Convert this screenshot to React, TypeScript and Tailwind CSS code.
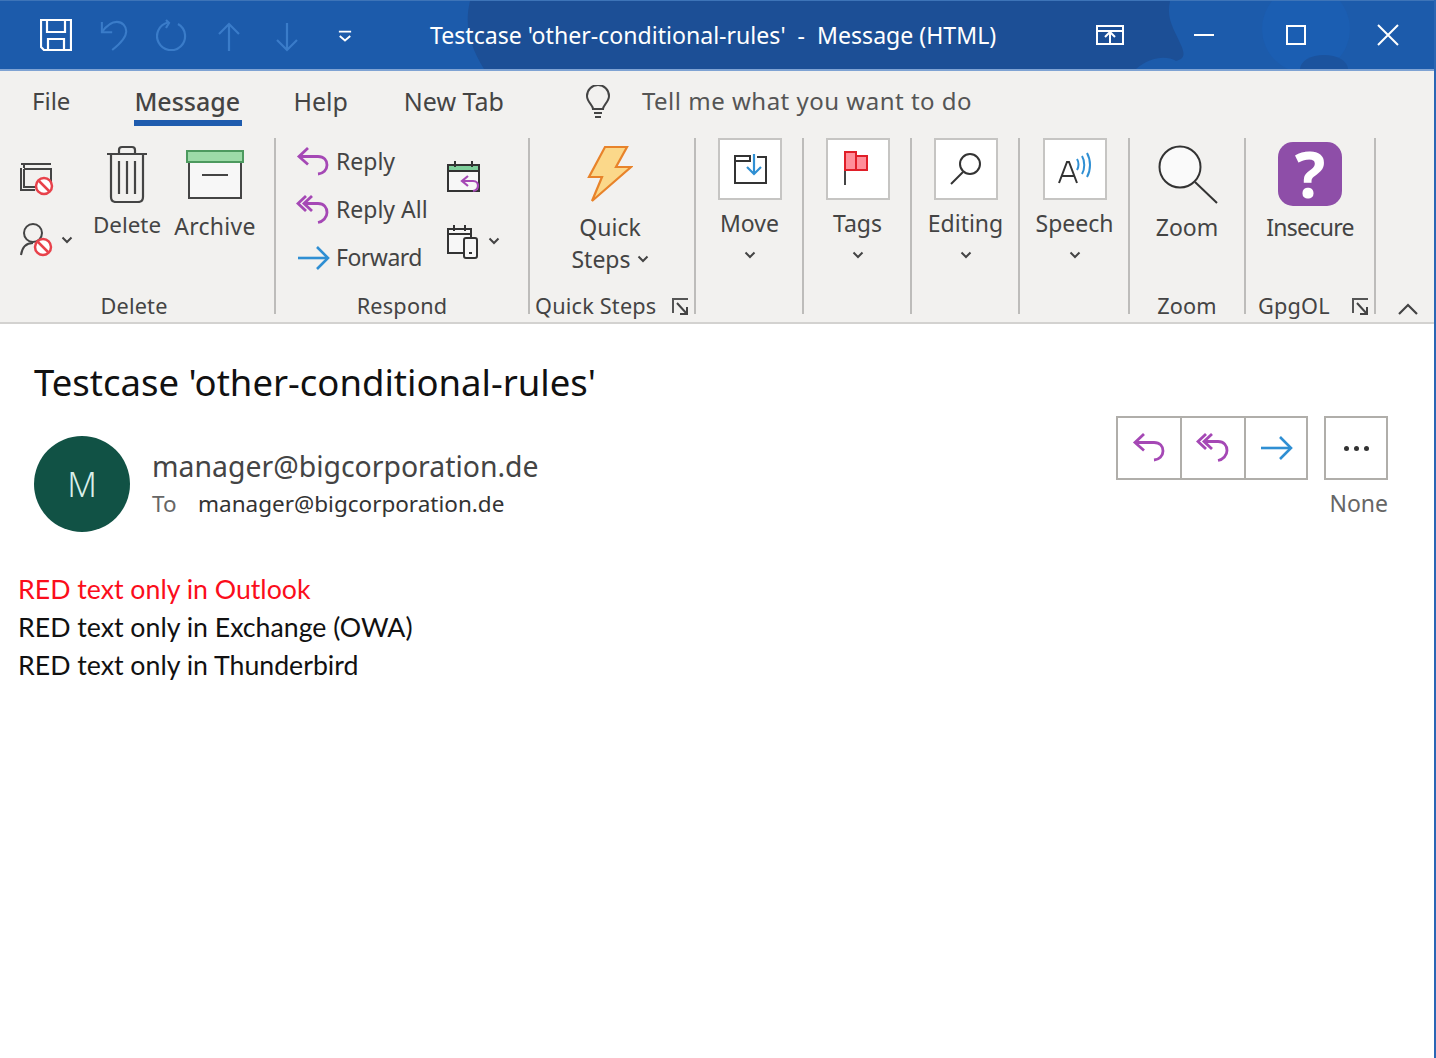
import type { ReactNode } from "react";

const sans = "font-['Noto_Sans','Open_Sans',sans-serif]";

function Chevron({ className = "" }: { className?: string }) {
  return (
    <svg width="12" height="8" viewBox="0 0 12 8" className={className} fill="none" stroke="#444" strokeWidth="2">
      <path d="M1.5 1.5 6 6l4.5-4.5" />
    </svg>
  );
}

function Launcher() {
  return (
    <svg width="18" height="18" viewBox="0 0 18 18" fill="none" stroke="#555" strokeWidth="2">
      <path d="M16 1H1v14" />
      <path d="M5 5l10 11M15 9v7H8" stroke="#444" />
    </svg>
  );
}

function ReplyIcon({ size = 34 }: { size?: number }) {
  return (
    <svg width={size} height={size} viewBox="0 0 34 34" fill="none" stroke="#a548b5" strokeWidth="2.8">
      <path d="M12 3 3 11.5l9 8" />
      <path d="M3 11.5h19c6 0 9 4 9 8.500 0 5-4 8.500-9 9" />
    </svg>
  );
}

function ReplyAllIcon({ size = 34 }: { size?: number }) {
  return (
    <svg width={size} height={size} viewBox="0 0 34 34" fill="none" stroke="#a548b5" strokeWidth="2.8">
      <path d="M10 3 2 10.500l8 7.500" />
      <path d="M16 3 8 10.500l8 7.500" />
      <path d="M8 10.500h14c6 0 9 4 9 9 0 5-4 9-9 10" />
    </svg>
  );
}

function ForwardIcon({ size = 34 }: { size?: number }) {
  return (
    <svg width={size} height={size} viewBox="0 0 34 34" fill="none" stroke="#2f8fd3" strokeWidth="2.600">
      <path d="M2 17h29" />
      <path d="M21 6l11 11-11 11" />
    </svg>
  );
}

function NoEntry({ x, y }: { x: number; y: number }) {
  return (
    <g>
      <circle cx={x} cy={y} r="8" fill="#fff" stroke="#e8424b" strokeWidth="2.500" />
      <path d={`M${x - 5} ${y - 5}l10 10`} stroke="#e8424b" strokeWidth="2.500" />
    </g>
  );
}

function Group({
  width,
  label,
  launcher,
  children,
  labelClass = "",
}: {
  width: string;
  label?: string;
  launcher?: boolean;
  children: ReactNode;
  labelClass?: string;
}) {
  return (
    <div className={`flex h-[176px] shrink-0 flex-col border-r-2 border-[#bdbcba] ${width}`}>
      <div className="flex min-h-0 flex-1">{children}</div>
      <div className={`relative flex h-[28px] items-center justify-center pt-[12px] text-[21.7px] tracking-[0.2px] text-[#444] ${labelClass}`}>
        {label}
        {launcher && (
          <span className="absolute right-[4px] top-[12px]">
            <Launcher />
          </span>
        )}
      </div>
    </div>
  );
}

function BoxedButton({ icon, label }: { icon: ReactNode; label: string }) {
  return (
    <div className="ml-[1px] flex w-full flex-col items-center">
      <div className="flex h-[62px] w-[64px] items-center justify-center border-2 border-[#c6c5c3] bg-white">{icon}</div>
      <div className="mt-[7px] h-[32px] text-[23px] leading-[32px] text-[#444]">{label}</div>
      <Chevron className="mt-[12px]" />
    </div>
  );
}

function RespondRow({ icon, label, labelClass = "" }: { icon: ReactNode; label: string; labelClass?: string }) {
  return (
    <div className="flex h-[48px] items-center">
      <span className="flex w-[40px] shrink-0 items-center">{icon}</span>
      <span className={`-mt-[1px] text-[23px] text-[#444] ${labelClass}`}>{label}</span>
    </div>
  );
}

function CalendarReply() {
  return (
    <svg width="36" height="36" viewBox="0 0 36 36" fill="none">
      <path d="M2 6h31v26H2z" stroke="#333" strokeWidth="2" fill="#f7f7f7" />
      <path d="M2 6h31v6H2z" fill="#7fcf9b" stroke="#333" strokeWidth="2" />
      <path d="M9 2v6M26 2v6" stroke="#333" strokeWidth="2" />
      <path d="M22 17l-6 5 6 5M16 22h11c4 0 5 3 5 4.500 0 3-2 5-5 5.500" stroke="#a548b5" strokeWidth="2.200" />
    </svg>
  );
}

function CalendarPhone() {
  return (
    <svg width="34" height="36" viewBox="0 0 34 36" fill="none">
      <path d="M2 6h23v24H2z" stroke="#333" strokeWidth="2" fill="#f7f7f7" />
      <path d="M2 6h23v5H2z" stroke="#333" strokeWidth="2" />
      <path d="M8 2v6M19 2v6" stroke="#333" strokeWidth="2" />
      <rect x="18" y="15" width="13" height="20" rx="2" fill="#f7f7f7" stroke="#333" strokeWidth="2" />
      <path d="M23 30h3" stroke="#333" strokeWidth="2" />
    </svg>
  );
}

export default function App() {
  return (
    <div className={`flex h-[1058px] w-[1436px] flex-col overflow-hidden border-r-2 border-[#2a66b4] bg-white ${sans}`}>
      {/* Title bar */}
      <div className="relative flex h-[71px] shrink-0 items-center border-b-2 border-t border-[#7fa3d3] border-t-[#3d74b8] bg-[#1c5bab] text-white">
        <svg className="absolute inset-0" width="1436" height="68" viewBox="0 0 1436 68">
          <path d="M470 0c-6 25 0 45 14 68h652c14-12 30-14 40-8 8-2 10-6 4-18-6-14-14-24-10-42z" fill="#1c4f96" />
          <circle cx="1306" cy="28" r="44" fill="#1b5eb2" />
          <ellipse cx="1324" cy="68" rx="24" ry="14" fill="#1b539e" />
        </svg>
        <div className="relative flex w-full items-center">
          <div className="ml-[40px] flex w-[390px] items-center">
            <svg width="32" height="32" viewBox="0 0 32 32" fill="none" stroke="#fff" strokeWidth="2.200">
              <path d="M1 1h30v30H4l-3-3z" />
              <path d="M7 1v12h18V1" />
              <path d="M8 31V20h16v11" />
            </svg>
            <svg width="30" height="34" viewBox="0 0 32 34" fill="none" stroke="#3a7cc9" strokeWidth="2.200" className="ml-[28px]">
              <path d="M2 3v11h11" />
              <path d="M2 14C7 7 12 3 18 3c6 0 10 5 10 10 0 6-6 13-15 20" />
            </svg>
            <svg width="32" height="32" viewBox="0 0 32 32" fill="none" stroke="#3a7cc9" strokeWidth="2.200" className="ml-[26px]">
              <path d="M22 5a14 14 0 1 1-10-1.500" />
              <path d="M10 1l3 3-3 5" />
            </svg>
            <svg width="22" height="30" viewBox="0 0 22 30" fill="none" stroke="#3a7cc9" strokeWidth="2.200" className="ml-[30px] mt-[4px]">
              <path d="M11 29V2M1 12 11 2l10 10" />
            </svg>
            <svg width="22" height="30" viewBox="0 0 22 30" fill="none" stroke="#3a7cc9" strokeWidth="2.200" className="ml-[36px] mt-[4px]">
              <path d="M11 1v27M1 18l10 10 10-10" />
            </svg>
            <svg width="14" height="14" viewBox="0 0 16 14" fill="none" stroke="#fff" strokeWidth="2.200" className="ml-[40px] mt-[1px]">
              <path d="M1 2h14M2 7l6 5 6-5" />
            </svg>
          </div>
          <div className="whitespace-pre text-[23.1px] leading-[32px]">Testcase 'other-conditional-rules'  -  Message (HTML)</div>
          <div className="ml-auto mr-[35px] flex items-center">
            <svg width="28" height="20" viewBox="0 0 28 20" fill="none" stroke="#fff" strokeWidth="2">
              <path d="M1 1h26v18H1zM1 6h26M14 18V8M9 12l5-5 5 5" />
            </svg>
            <svg width="22" height="4" viewBox="0 0 22 4" fill="none" stroke="#fff" strokeWidth="2" className="ml-[69px]">
              <path d="M1 2h20" />
            </svg>
            <svg width="20" height="20" viewBox="0 0 20 20" fill="none" stroke="#fff" strokeWidth="2" className="ml-[71px]">
              <path d="M1 1h18v18H1z" />
            </svg>
            <svg width="22" height="22" viewBox="0 0 22 22" fill="none" stroke="#fff" strokeWidth="2" className="ml-[71px]">
              <path d="M1 1l20 20M21 1 1 21" />
            </svg>
          </div>
        </div>
      </div>

      {/* Ribbon */}
      <div className="flex h-[253px] shrink-0 flex-col border-b-2 border-[#d3d2d0] bg-[#f2f1ef]">
        <div className="flex h-[67px] shrink-0 items-start text-[24px] text-[#444]">
          <div className="ml-[32px] mt-[14px] leading-[32px]">File</div>
          <div className="ml-[64px] mt-[14px] flex flex-col text-[25px] font-medium">
            <span className="leading-[32px]">Message</span>
            <span className="mt-[3px] h-[6px] w-[108px] bg-[#1f5cae]" />
          </div>
          <div className="ml-[51px] mt-[14px] text-[25px] leading-[32px]">Help</div>
          <div className="ml-[56px] mt-[14px] text-[25px] leading-[32px]">New Tab</div>
          <svg width="26" height="34" viewBox="0 0 26 34" fill="none" stroke="#444" strokeWidth="2" className="ml-[81px] mt-[14px]">
            <path d="M8 24c0-4-6-7-6-13a11 11 0 0 1 22 0c0 6-6 9-6 13z" />
            <path d="M9 28h8M10 32h6" />
          </svg>
          <div className="ml-[31px] mt-[14px] leading-[32px] tracking-[0.5px] text-[#555]">Tell me what you want to do</div>
        </div>

        <div className="flex flex-1 items-start">
          <Group width="w-[276px]" label="Delete" labelClass="pr-[6px]">
            <div className="flex w-[92px] flex-col pl-[19px] pt-[24px]">
              <svg width="36" height="34" viewBox="0 0 36 34" fill="none">
                <path d="M2 2h30M5 2v4M2 6v22h14" stroke="#444" strokeWidth="2" />
                <path d="M5 7h27v14M5 7v18h12" stroke="#444" strokeWidth="2" />
                <NoEntry x={25} y={24} />
              </svg>
              <div className="mt-[26px] flex items-center">
                <svg width="36" height="36" viewBox="0 0 36 36" fill="none">
                  <circle cx="14" cy="11" r="9" stroke="#444" strokeWidth="2" />
                  <path d="M2 33c1-7 4-12 12-12" stroke="#444" strokeWidth="2" />
                  <NoEntry x={24} y={25} />
                </svg>
                <Chevron className="ml-[6px]" />
              </div>
            </div>
            <div className="flex w-[70px] flex-col items-center pt-[7px]">
              <svg width="42" height="58" viewBox="0 0 42 58" fill="none" stroke="#444" strokeWidth="2.200">
                <path d="M1 9h40M13 9V5c0-2 1-3 3-3h10c2 0 3 1 3 3v4" />
                <path d="M5 9v43c0 3 2 5 5 5h22c3 0 5-2 5-5V9" />
                <path d="M13 16v33M21 16v33M29 16v33" />
              </svg>
              <div className="mt-[6px] text-[22.4px] leading-[32px] text-[#444]">Delete</div>
            </div>
            <div className="ml-[9px] flex w-[88px] flex-col items-center pt-[12px]">
              <svg width="58" height="50" viewBox="0 0 58 50" fill="none" stroke="#444" strokeWidth="2">
                <path d="M3 11h52v37H3z" fill="#f7f7f7" />
                <path d="M1 1h56v11H1z" fill="#9ddba8" stroke="#4d9a5f" />
                <path d="M16 25h26" />
              </svg>
              <div className="mt-[10px] text-[23px] leading-[32px] tracking-[0.3px] text-[#444]">Archive</div>
            </div>
          </Group>

          <Group width="w-[254px]" label="Respond">
            <div className="flex flex-col pl-[20px] pt-[0px]">
              <RespondRow icon={<ReplyIcon />} label="Reply" />
              <RespondRow icon={<ReplyAllIcon />} label="Reply All" />
              <RespondRow icon={<ForwardIcon />} label="Forward" labelClass="tracking-[-0.5px]" />
            </div>
            <div className="ml-[18px] flex flex-col pt-[21px]">
              <CalendarReply />
              <div className="mt-[28px] flex items-center">
                <CalendarPhone />
                <Chevron className="ml-[8px]" />
              </div>
            </div>
          </Group>

          <Group width="w-[166px]" label="Quick Steps" launcher labelClass="justify-start pl-[5px]">
            <div className="-ml-[2px] flex w-full flex-col items-center pt-[7px] text-[23px] leading-[32px] text-[#444]">
              <svg width="46" height="58" viewBox="0 0 46 58" fill="#fbd88a" stroke="#e8832a" strokeWidth="2.200">
                <path d="M18 2h22L29 22h15L5 56l10-24H2z" />
              </svg>
              <div className="mt-[8px]">Quick</div>
              <div className="flex items-center">
                Steps
                <Chevron className="ml-[6px]" />
              </div>
            </div>
          </Group>

          <Group width="w-[108px]">
            <BoxedButton
              label="Move"
              icon={
                <svg width="34" height="32" viewBox="0 0 34 32" fill="none">
                  <path d="M2 3h15v5h-15zM2 3v27h31V4h-9" stroke="#333" strokeWidth="2" />
                  <path d="M21 1v19M14 14l7 7 7-7" stroke="#2f8fd3" strokeWidth="2.200" />
                </svg>
              }
            />
          </Group>
          <Group width="w-[108px]">
            <BoxedButton
              label="Tags"
              icon={
                <svg width="26" height="34" viewBox="0 0 26 34" fill="none" className="-ml-[4px] -mt-[2px]">
                  <path d="M2 1v33" stroke="#444" strokeWidth="2" />
                  <path d="M13 5h11v14H13z" fill="#ff8e99" stroke="#e01e28" strokeWidth="2" />
                  <path d="M2 1h11v18H2z" fill="#ff8e99" stroke="#e01e28" strokeWidth="2" />
                </svg>
              }
            />
          </Group>
          <Group width="w-[108px]">
            <BoxedButton
              label="Editing"
              icon={
                <svg width="34" height="34" viewBox="0 0 34 34" fill="none" stroke="#333" strokeWidth="2">
                  <circle cx="21" cy="12" r="10" fill="#fff" />
                  <path d="M14 20 2 32" />
                </svg>
              }
            />
          </Group>
          <Group width="w-[110px]">
            <BoxedButton
              label="Speech"
              icon={
                <svg width="34" height="34" viewBox="0 0 34 34" fill="none">
                  <path d="M1 31 9 10h2l8 21M4 24h12" stroke="#333" strokeWidth="2" />
                  <path d="M19 7c2 3 2 8 0 11M24 4c3 5 3 13 0 18M29 1c4 7 4 17 0 24" stroke="#2f8fd3" strokeWidth="2" />
                </svg>
              }
            />
          </Group>
          <Group width="w-[116px]" label="Zoom">
            <div className="flex w-full flex-col items-center pt-[7px]">
              <svg width="60" height="60" viewBox="0 0 60 60" fill="none" stroke="#333" strokeWidth="2" className="ml-[2px]">
                <circle cx="22" cy="22" r="20.500" fill="#fafafa" />
                <path d="M37 37l22 21" />
              </svg>
              <div className="mt-[6px] text-[23px] leading-[32px] text-[#444]">Zoom</div>
            </div>
          </Group>
          <Group width="w-[130px]" label="GpgOL" launcher labelClass="justify-start pl-[12px]">
            <div className="flex w-full flex-col items-center pt-[4px]">
              <div className="flex h-[64px] w-[64px] items-center justify-center rounded-[15px] bg-[#8e4ea8] text-[64px] font-bold leading-none text-white">?</div>
              <div className="mt-[5px] text-[23px] leading-[32px] tracking-[-0.7px] text-[#444]">Insecure</div>
            </div>
          </Group>
          <div className="ml-[22px] mt-[165px]">
            <svg width="20" height="12" viewBox="0 0 20 12" fill="none" stroke="#444" strokeWidth="2.200">
              <path d="M1 11l9-9 9 9" />
            </svg>
          </div>
        </div>
      </div>

      {/* Message */}
      <div className="flex flex-1 flex-col">
        <div className="ml-[34px] mt-[36px] text-[36.5px] leading-[44px] text-[#111]">Testcase 'other-conditional-rules'</div>
        <div className="mt-[12px] flex items-start">
          <div className="ml-[34px] mt-[20px] flex h-[96px] w-[96px] items-center justify-center rounded-full bg-[#115245] text-[34px] font-light text-[#d9efe9]">M</div>
          <div className="ml-[22px] mt-[31px] flex flex-col">
            <div className="text-[28.4px] leading-[38px] text-[#444]">manager@bigcorporation.de</div>
            <div className="flex text-[22.5px] leading-[38px]">
              <span className="w-[46px] text-[#666]">To</span>
              <span className="text-[#333]">manager@bigcorporation.de</span>
            </div>
          </div>
          <div className="ml-auto mr-[46px] flex flex-col items-end">
            <div className="flex">
              <div className="flex border-2 border-[#b0aeaa]">
                <span className="flex h-[60px] w-[64px] items-center justify-center border-r-2 border-[#b0aeaa]"><ReplyIcon /></span>
                <span className="flex h-[60px] w-[64px] items-center justify-center border-r-2 border-[#b0aeaa]"><ReplyAllIcon /></span>
                <span className="flex h-[60px] w-[60px] items-center justify-center"><ForwardIcon /></span>
              </div>
              <div className="ml-[16px] flex h-[64px] w-[64px] items-center justify-center gap-[5px] border-2 border-[#b0aeaa]">
                <span className="h-[5px] w-[5px] rounded-full bg-[#333]" />
                <span className="h-[5px] w-[5px] rounded-full bg-[#333]" />
                <span className="h-[5px] w-[5px] rounded-full bg-[#333]" />
              </div>
            </div>
            <div className="mt-[7px] text-[23px] leading-[32px] text-[#666]">None</div>
          </div>
        </div>
        <div className="ml-[18px] mt-[38px] font-['Lato',sans-serif] text-[26.7px] leading-[38px] text-[#111]">
          <div className="text-[#fb0d1b]">RED text only in Outlook</div>
          <div>RED text only in Exchange (OWA)</div>
          <div>RED text only in Thunderbird</div>
        </div>
      </div>
    </div>
  );
}
